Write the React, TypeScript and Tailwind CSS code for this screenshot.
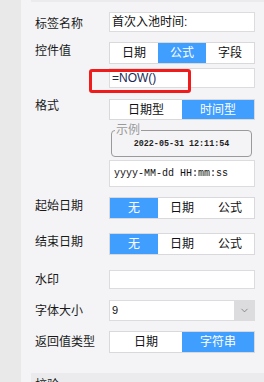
import { ChevronDown } from "lucide-react";

const cjk = "font-['Liberation_Sans','Noto_Sans_CJK_SC',sans-serif]";

function Segmented({ items, active }: { items: string[]; active: number }) {
  return (
    <div className="flex h-[22px] w-[146px] border border-[#d9d9dc] bg-white">
      {items.map((item, i) => (
        <div
          key={item}
          className={`flex flex-1 items-center justify-center text-[12px] leading-none ${
            i === active ? "bg-[#409eff] text-white" : "text-[#111]"
          }`}
        >
          {item}
        </div>
      ))}
    </div>
  );
}

function Label({ text, up = false }: { text: string; up?: boolean }) {
  return (
    <div className={`w-[74px] shrink-0 text-[12px] leading-[16px] text-[#1a1a1a] ${up ? "mb-[5px]" : ""}`}>
      {text}
    </div>
  );
}

export default function App() {
  return (
    <div className={`flex h-[382px] w-[264px] overflow-hidden ${cjk}`}>
      <div className="w-[21px] shrink-0 bg-[#e9e9e9]" />
      <div className="flex flex-1 flex-col bg-[#f4f4f6]">
        <div className="ml-[10px] h-[2px] shrink-0 bg-[#ebebed]" />

        {/* 标签名称 */}
        <div className="ml-[14px] mt-[10px] flex items-center">
          <div className="mt-[3px] w-[74px] shrink-0 text-[12px] leading-[16px] text-[#1a1a1a]">标签名称</div>
          <div className="flex h-[20px] w-[146px] items-center border border-[#dcdcdf] bg-white pl-[2px] text-[12px] text-[#111]">
            首次入池时间:
          </div>
        </div>

        {/* 控件值 */}
        <div className="ml-[14px] mt-[10px] flex items-center">
          <Label text="控件值" up />
          <Segmented items={["日期", "公式", "字段"]} active={1} />
        </div>

        {/* 公式 */}
        <div className="relative ml-[88px] mt-[4px]">
          <div className="flex h-[20px] w-[146px] items-center border border-[#dcdcdf] bg-white pl-[2px] font-['Liberation_Sans',sans-serif] text-[12px] text-[#1b2a55]">
            =NOW()
          </div>
          <div className="pointer-events-none absolute left-[-20px] top-[1px] h-[24px] w-[102px] rounded-[3px] border-[3px] border-[#f01c1c]" />
        </div>

        {/* 格式 */}
        <div className="ml-[14px] mt-[11px] flex items-start">
          <div className="mt-[-1px] w-[74px] shrink-0 text-[12px] leading-[16px] text-[#1a1a1a]">格式</div>
          <div className="flex w-[146px] flex-col">
            <div className="flex h-[21px] border border-[#d9d9dc] bg-white">
              <div className="flex flex-1 items-center justify-center text-[12px] text-[#111]">日期型</div>
              <div className="flex flex-1 items-center justify-center bg-[#409eff] text-[12px] text-white">时间型</div>
            </div>
            <fieldset className="ml-[2px] mt-[3px] h-[34px] w-[141px] rounded-[4px] border border-[#9a9a9a] px-[3px]">
              <legend className="px-[1px] text-[12px] leading-[14px] text-[#9a9a9a]">示例</legend>
              <div className="mt-[1px] text-center font-['Liberation_Mono',monospace] text-[8.4px] font-bold leading-[12px] text-[#222]">
                2022-05-31 12:11:54
              </div>
            </fieldset>
            <div className="mt-[3px] flex h-[27px] items-center border border-[#dcdcdf] bg-white pl-[4px] font-['Liberation_Mono',monospace] text-[10px] text-[#111]">
              yyyy-MM-dd HH:mm:ss
            </div>
          </div>
        </div>

        {/* 起始日期 */}
        <div className="ml-[14px] mt-[10px] flex items-center">
          <Label text="起始日期" up />
          <Segmented items={["无", "日期", "公式"]} active={0} />
        </div>

        {/* 结束日期 */}
        <div className="ml-[14px] mt-[14px] flex items-center">
          <Label text="结束日期" up />
          <Segmented items={["无", "日期", "公式"]} active={0} />
        </div>

        {/* 水印 */}
        <div className="ml-[14px] mt-[15px] flex items-center">
          <Label text="水印" />
          <div className="h-[19px] w-[146px] border border-[#dcdcdf] bg-white" />
        </div>

        {/* 字体大小 */}
        <div className="ml-[14px] mt-[11px] flex items-center">
          <Label text="字体大小" />
          <div className="flex h-[21px] w-[146px] border border-[#dcdcdf] bg-white">
            <div className="flex flex-1 items-center pl-[2px] font-['Liberation_Sans',sans-serif] text-[11px] text-[#111]">9</div>
            <div className="flex w-[20px] items-center justify-center bg-[#dcdcdf]">
              <ChevronDown className="h-[11px] w-[11px] text-[#666]" strokeWidth={1.5} />
            </div>
          </div>
        </div>

        {/* 返回值类型 */}
        <div className="ml-[14px] mt-[10px] flex items-center">
          <Label text="返回值类型" />
          <Segmented items={["日期", "字符串"]} active={1} />
        </div>

        {/* 校验 */}
        <div className="ml-[10px] mt-[20px] flex flex-1 justify-between bg-[#ebebed] pl-[4px] pr-[14px] pt-[4px]">
          <span className="text-[12px] leading-[16px] text-[#1a1a1a]">校验</span>
          <span className="mt-[6px] h-[6px] w-[7px] bg-[#b8b8b8]" />
        </div>
      </div>
    </div>
  );
}
